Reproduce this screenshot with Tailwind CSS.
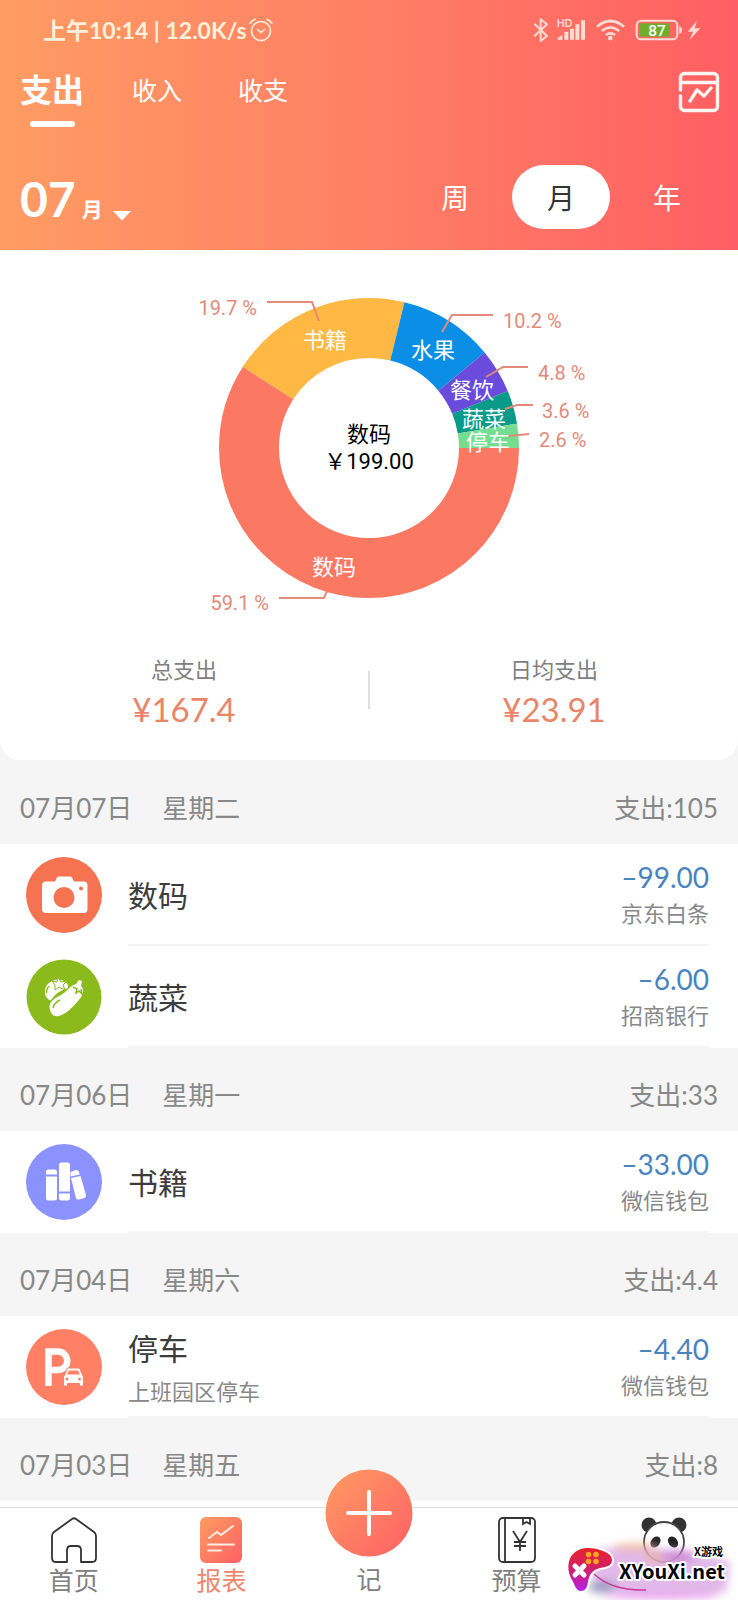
<!DOCTYPE html>
<html lang="zh-CN">
<head>
  <meta charset="UTF-8" />
  <meta name="viewport" content="width=device-width, initial-scale=1.0" />
  <script src="https://cdn.jsdelivr.net/npm/@tailwindcss/browser@4"></script>
  <title>报表</title>
</head>
<body class="bg-[#f5f5f5] min-h-screen flex flex-col font-['Lato','Noto_Sans_CJK_SC',sans-serif] text-[#3c3c3c]">

  <!-- Header -->
  <header class="bg-linear-to-r/srgb from-[#ff9c63] via-[#ff7f65] to-[#ff5f63] text-white">
    <!-- Status bar -->
    <div class="flex items-center justify-between h-[60px] pl-[43px] pr-9 text-[#fff0dc]">
      <div class="flex items-center gap-0.5 text-[23px] leading-7 font-bold">
        <span>上午10:14 | 12.0K/s</span>
        <svg class="w-6 h-6" viewBox="0 0 24 24" fill="none" stroke="currentColor" stroke-width="1.6" stroke-linecap="round">
          <circle cx="12" cy="13" r="9.5" />
          <path d="M1 5.5Q3 2.5 6 1.2M23 5.5Q21 2.5 18 1.2M8.5 11.5l3.5 3 3.5-3" />
        </svg>
      </div>
      <svg class="w-[172px] h-7" viewBox="486 48 516 84" fill="none" stroke="#ffdcd2" stroke-width="6">
        <path d="M499 71l38 37-19 15V58l19 15-38 36" stroke-linejoin="round" />
        <text x="566" y="80" font-size="31" font-weight="700" fill="#ffdcd2" stroke="none" font-family="Lato">HD</text>
        <path d="M569 119v-6l14-8v14zM589 119v-24h12v24zM606 119V86h12v33zM622 119V73h12v46zM639 119V61h12v58z" fill="#ffdcd2" stroke="none" />
        <path d="M687 80Q727 46 768 80M701 93Q727 72 754 93M714 105Q727 95 741 105" stroke-width="8" />
        <circle cx="727" cy="114" r="7" fill="#ffdcd2" stroke="none" />
        <rect x="806" y="62" width="122" height="56" rx="14" />
        <path d="M815 70h89v40h-89z" fill="#6fae2c" stroke="none" />
        <path d="M934 78q8 3 8 12t-8 12z" fill="#ffdcd2" stroke="none" />
        <text x="867" y="107" text-anchor="middle" font-size="46" font-weight="500" fill="#fff" stroke="none" font-family="Roboto">87</text>
        <path d="M987 62l-28 33h16l-10 24 32-34h-17z" fill="#ffdcd2" stroke="none" />
      </svg>
    </div>

    <!-- Tabs -->
    <div class="flex items-start justify-between h-[72px] pl-5 pr-[18px]">
      <nav class="flex items-start pt-3 text-[25px] leading-9">
        <button class="flex flex-col items-center mr-5 text-[32px] leading-9 font-bold">
          支出
          <span class="mt-[13px] w-[45px] h-1.5 rounded-sm bg-white"></span>
        </button>
        <button class="px-7">收入</button>
        <button class="px-7">收支</button>
      </nav>
      <button class="mt-[11px]" aria-label="图表">
        <svg class="w-[42px] h-[42px]" viewBox="0 0 42 42" fill="none" stroke="#fff4f0" stroke-width="3.4" stroke-linecap="round" stroke-linejoin="round">
          <path d="M2.500 19V6.500a4 4 0 0 1 4-4h29a4 4 0 0 1 4 4v29a4 4 0 0 1-4 4h-29a4 4 0 0 1-4-4V25M3 11.500h36M12 30l7-11 7 6 7-8" />
        </svg>
      </button>
    </div>

    <!-- Period -->
    <div class="flex items-center justify-between pt-[33px] pb-[21px] pl-5 pr-[22px]">
      <button class="flex items-baseline h-16 pt-0.5 font-bold">
        <span class="text-[48px] leading-[64px]">07</span>
        <span class="ml-1.5 text-[21px]">月</span>
        <svg class="ml-2.5 w-[18px] h-2.5 self-end mb-2" viewBox="0 0 18 10" fill="#fff"><path d="M0 0h18l-9 9.500z" /></svg>
      </button>
      <div class="flex gap-2 text-[28px]">
        <button class="w-[98px] h-16 pt-0.5">周</button>
        <button class="w-[98px] h-16 pt-0.5 rounded-full bg-white text-[#333]">月</button>
        <button class="w-[98px] h-16 pt-0.5">年</button>
      </div>
    </div>
  </header>

  <main class="flex-1">
    <!-- Chart -->
    <section class="bg-white rounded-b-[20px] pb-[31px]">
      <svg class="block mx-auto w-[470px] h-[401px]" viewBox="-20 0 470 401" font-family="Roboto, 'Noto Sans CJK SC', sans-serif" font-size="22">
        <g fill="none" stroke-width="60">
          <circle cx="215" cy="198" r="120" pathLength="1000" stroke="#fb7863" stroke-dasharray="591 409" />
          <circle cx="215" cy="198" r="120" pathLength="1000" stroke="#ffb843" stroke-dasharray="197 803" stroke-dashoffset="-591" />
          <circle cx="215" cy="198" r="120" pathLength="1000" stroke="#0a8ee6" stroke-dasharray="102 898" stroke-dashoffset="-788" />
          <circle cx="215" cy="198" r="120" pathLength="1000" stroke="#6a4bdc" stroke-dasharray="48 952" stroke-dashoffset="-890" />
          <circle cx="215" cy="198" r="120" pathLength="1000" stroke="#0a9a8a" stroke-dasharray="36 964" stroke-dashoffset="-938" />
          <circle cx="215" cy="198" r="120" pathLength="1000" stroke="#75dd90" stroke-dasharray="26 974" stroke-dashoffset="-974" />
        </g>
        <g fill="none" stroke="#e38a78" stroke-width="2">
          <path d="M113 52h45l7 19" />
          <path d="M288 82l10-17h41" />
          <path d="M332 127l17-10h25" />
          <path d="M351 159l12-4h16" />
          <path d="M354 186l21-2" />
          <path d="M173 341l-3 7h-45" />
        </g>
        <g fill="#e38a78" font-size="20">
          <text x="103" y="65" text-anchor="end">19.7 %</text>
          <text x="349" y="78">10.2 %</text>
          <text x="384" y="130">4.8 %</text>
          <text x="388" y="168">3.6 %</text>
          <text x="385" y="197">2.6 %</text>
          <text x="115" y="360" text-anchor="end">59.1 %</text>
        </g>
        <g fill="#fff" text-anchor="middle">
          <text x="171" y="98">书籍</text>
          <text x="279" y="108">水果</text>
          <text x="318" y="148">餐饮</text>
          <text x="330" y="177">蔬菜</text>
          <text x="334" y="200">停车</text>
          <text x="180" y="325">数码</text>
        </g>
        <g fill="#000" text-anchor="middle">
          <text x="215" y="192">数码</text>
          <text x="215" y="219">￥199.00</text>
        </g>
      </svg>

      <div class="flex items-center text-center">
        <div class="flex-1">
          <p class="text-[22px] leading-[38px] text-[#808080]">总支出</p>
          <p class="text-[33px] leading-10 text-[#e98568]">¥167.4</p>
        </div>
        <div class="w-0.5 h-[38px] bg-[#dedede]"></div>
        <div class="flex-1">
          <p class="text-[22px] leading-[38px] text-[#808080]">日均支出</p>
          <p class="text-[33px] leading-10 text-[#e98568]">¥23.91</p>
        </div>
      </div>
    </section>

    <!-- 07-07 -->
    <h2 class="flex items-center h-[84px] pt-3 px-5 text-[26px] text-[#888]">
      <span>07月07日</span><span class="ml-[30px]">星期二</span><span class="ml-auto">支出:105</span>
    </h2>
    <ul class="bg-white">
      <li class="flex items-center h-[102px] pl-[26px] pr-[29px]">
        <svg class="w-[76px] h-[76px] shrink-0" viewBox="0 0 76 76">
          <circle cx="38" cy="38" r="38" fill="#f57350" />
          <path d="M20 24.500h9l2-4q.5-1 2-1h11q1.500 0 2 1l2 4h9.500a4 4 0 0 1 4 4V52a4 4 0 0 1-4 4H20a4 4 0 0 1-4-4V28.500a4 4 0 0 1 4-4z" fill="#fff" />
          <circle cx="38" cy="40.500" r="10.500" fill="#f57350" />
          <circle cx="55" cy="31.500" r="2" fill="#f57350" />
        </svg>
        <div class="flex flex-1 items-center self-stretch ml-[26px] border-b-2 border-[#f2f2f2]">
          <p class="pt-0.5 text-[30px] leading-[44px]">数码</p>
          <div class="ml-auto pt-1 text-right">
            <p class="text-[28px] leading-9 text-[#4a84bd]">–99.00</p>
            <p class="text-[22px] leading-[38px] text-[#888]">京东白条</p>
          </div>
        </div>
      </li>
      <li class="flex items-center h-[102px] pl-[26px] pr-[29px]">
        <svg class="w-[76px] h-[76px] shrink-0" viewBox="0 0 76 76">
          <circle cx="38" cy="38" r="37.500" fill="#8aba1b" />
          <path d="M22 40C16 34 19 25 26 22q6-3 12 0 5 3 4 7Q31 32 25 41q-1 1-3-1z" fill="#fff" />
          <path d="M26 22l5 1 1-5 3 5 6-1-4 4 2 5-6-3-4 3v-5z" fill="#fff" stroke="#8aba1b" stroke-width="1" />
          <path d="M20.500 34q0-5 3-7" fill="none" stroke="#8aba1b" stroke-width="1.500" />
          <path d="M24 51c-2-7 3-11 9-14 7-3 10-10 17-12l3-4 3 1-1 5c4 4 2 10-3 15-6 7-12 13-19 15-5 1-8-2-9-6z" fill="#fff" />
          <path d="M47 28l4 2-1 4 3-2 3 3-1-5M27 49q1-5 7-8" fill="none" stroke="#8aba1b" stroke-width="1.500" />
        </svg>
        <div class="flex flex-1 items-center self-stretch ml-[26px] border-b-2 border-[#f5f5f5]">
          <p class="pt-0.5 text-[30px] leading-[44px]">蔬菜</p>
          <div class="ml-auto pt-1 text-right">
            <p class="text-[28px] leading-9 text-[#4a84bd]">–6.00</p>
            <p class="text-[22px] leading-[38px] text-[#888]">招商银行</p>
          </div>
        </div>
      </li>
    </ul>

    <!-- 07-06 -->
    <h2 class="flex items-center h-[83px] pt-3 px-5 text-[26px] text-[#888]">
      <span>07月06日</span><span class="ml-[30px]">星期一</span><span class="ml-auto">支出:33</span>
    </h2>
    <ul class="bg-white">
      <li class="flex items-center h-[102px] pl-[26px] pr-[29px]">
        <svg class="w-[76px] h-[76px] shrink-0" viewBox="0 0 76 76">
          <circle cx="38" cy="38" r="38" fill="#8c92fd" />
          <g fill="#fff">
            <path d="M20 30.500V28q0-2.500 2.500-2.500h6q2.500 0 2.500 2.500v2.500zM20 32.500h11V54q0 2.500-2.500 2.500h-6Q20 56.500 20 54z" />
            <path d="M33 47.500V21q0-2.500 2.500-2.500h6Q44 18.500 44 21v26.500zM33 49.500h11V54q0 2.500-2.500 2.500h-6Q33 56.500 33 54z" />
            <path d="M44.500 28l5.500-2q2-.5 3 2l.8 2.500-9.300 2zM45 34l9.500-2L60 51q.5 2-1.500 3l-5.500 1.500q-2.500.5-3-1.500z" />
          </g>
        </svg>
        <div class="flex flex-1 items-center self-stretch ml-[26px] border-b-2 border-[#f5f5f5]">
          <p class="pt-0.5 text-[30px] leading-[44px]">书籍</p>
          <div class="ml-auto pt-1 text-right">
            <p class="text-[28px] leading-9 text-[#4a84bd]">–33.00</p>
            <p class="text-[22px] leading-[38px] text-[#888]">微信钱包</p>
          </div>
        </div>
      </li>
    </ul>

    <!-- 07-04 -->
    <h2 class="flex items-center h-[83px] pt-3 px-5 text-[26px] text-[#888]">
      <span>07月04日</span><span class="ml-[30px]">星期六</span><span class="ml-auto">支出:4.4</span>
    </h2>
    <ul class="bg-white">
      <li class="flex items-center h-[102px] pl-[26px] pr-[29px]">
        <svg class="w-[76px] h-[76px] shrink-0" viewBox="0 0 76 76">
          <circle cx="38" cy="38" r="38" fill="#ff8065" />
          <path d="M22.500 57V22.500h9.500a8.500 8.500 0 0 1 0 18.500h-9.500" fill="none" stroke="#fff" stroke-width="6.500" />
          <path d="M38.500 46l3-7h12l3 7q1 1 1 3v8h-4v-2.500h-12V57h-4v-8q0-2 1-3z" fill="#fff" stroke="#ff8065" stroke-width="1" />
          <path d="M41 45.500l2-4h9l2 4z" fill="#ff8065" />
          <circle cx="41" cy="50" r="1.500" fill="#ff8065" />
          <circle cx="53.500" cy="50" r="1.500" fill="#ff8065" />
        </svg>
        <div class="flex flex-1 items-center self-stretch ml-[26px] border-b-2 border-[#f5f5f5]">
          <div class="pt-2">
            <p class="text-[30px] leading-[44px]">停车</p>
            <p class="text-[22px] leading-[44px] text-[#888]">上班园区停车</p>
          </div>
          <div class="ml-auto pt-1 text-right">
            <p class="text-[28px] leading-9 text-[#4a84bd]">–4.40</p>
            <p class="text-[22px] leading-[38px] text-[#888]">微信钱包</p>
          </div>
        </div>
      </li>
    </ul>

    <!-- 07-03 -->
    <h2 class="flex items-center h-[83px] pt-3 px-5 text-[26px] text-[#888]">
      <span>07月03日</span><span class="ml-[30px]">星期五</span><span class="ml-auto">支出:8</span>
    </h2>
    <div class="h-1.5 bg-white"></div>
  </main>

  <!-- Bottom nav -->
  <nav class="sticky bottom-0 grid grid-cols-5 h-[93px] border-t border-[#dedede] bg-white text-[25px] leading-8 text-[#808080]">
    <button class="flex flex-col items-center pt-2">
      <svg class="w-[46px] h-[48px]" viewBox="0 0 46 48" fill="none" stroke="#333" stroke-width="1.800" stroke-linejoin="round">
        <path d="M21 3Q23 1.500 25 3l18 13q2 1.500 2 4v22q0 4-4 4H30V34q0-4-4-4h-6q-4 0-4 4v12H5q-4 0-4-4V20q0-2.500 2-4z" />
      </svg>
      <span>首页</span>
    </button>
    <button class="flex flex-col items-center pt-2 text-[#ef866c]">
      <svg class="w-[42px] h-[48px]" viewBox="0 0 42 48">
        <defs>
          <linearGradient id="warm" x1="0" y1="0" x2="1" y2="1">
            <stop offset="0" stop-color="#ff9c63" />
            <stop offset="1" stop-color="#ff6064" />
          </linearGradient>
        </defs>
        <rect y="1" width="42" height="46" rx="6" fill="url(#warm)" />
        <path d="M9 22l8-6 4 3 12-9M8 28.500h26M8 34.500h13" fill="none" stroke="#ffeee2" stroke-width="2" stroke-linecap="round" />
      </svg>
      <span>报表</span>
    </button>
    <button class="relative flex flex-col items-center pt-[55px]">
      <svg class="absolute -top-[39px] w-[88px] h-[88px]" viewBox="0 0 88 88">
        <circle cx="44" cy="44" r="43.500" fill="url(#warm)" />
        <path d="M44 23v42M23 44h42" stroke="#fff" stroke-width="4" stroke-linecap="round" />
      </svg>
      <span>记</span>
    </button>
    <button class="flex flex-col items-center pt-2">
      <svg class="w-[38px] h-[48px]" viewBox="0 0 38 48" fill="none" stroke="#333" stroke-width="1.800">
        <rect x="1" y="2" width="36" height="44" rx="4" />
        <path d="M7 2v44M25 2v6l3.500-2 3.500 2V2M15 15l7 11 7-11M22 26v9M16 26h12M16 30h12" />
      </svg>
      <span>预算</span>
    </button>
    <button class="flex flex-col items-center pt-2" aria-label="我的">
      <svg class="w-[46px] h-[48px]" viewBox="0 0 46 48">
        <circle cx="8" cy="9" r="7.500" fill="#333" />
        <circle cx="38" cy="9" r="7.500" fill="#333" />
        <circle cx="23" cy="26" r="20" fill="#fff" stroke="#444" stroke-width="1.800" />
        <ellipse cx="14.500" cy="26" rx="4.500" ry="6" transform="rotate(35 14.500 26)" fill="#222" />
        <ellipse cx="32" cy="26" rx="4.500" ry="6" transform="rotate(-35 32 26)" fill="#222" />
      </svg>
    </button>

    <!-- Site badge -->
    <svg class="absolute right-0 bottom-0 w-[198px] h-[80px] pointer-events-none" viewBox="0 40 198 80" font-family="'Noto Sans CJK SC', sans-serif" font-weight="700">
      <defs>
        <linearGradient id="pad" x1="0" y1="0" x2="0" y2="1">
          <stop offset="0" stop-color="#e8222b" />
          <stop offset="0.500" stop-color="#d0206c" />
          <stop offset="1" stop-color="#b321e6" />
        </linearGradient>
        <filter id="glow" x="-30%" y="-60%" width="160%" height="220%"><feGaussianBlur stdDeviation="4" /></filter>
      </defs>
      <g filter="url(#glow)">
        <path d="M48 72q35-8 82-2 40 3 60 12l-4 30q-70 10-130-3z" fill="#dba7e4" opacity="0.800" />
        <ellipse cx="95" cy="67" rx="22" ry="4" fill="#f0b283" opacity="0.700" />
        <ellipse cx="116" cy="78" rx="12" ry="4" fill="#f0b08a" opacity="0.800" />
        <ellipse cx="62" cy="107" rx="14" ry="6" fill="#9c9cc0" />
        <ellipse cx="138" cy="76" rx="18" ry="6" fill="#c77ed2" opacity="0.800" />
        <ellipse cx="120" cy="116" rx="58" ry="3" fill="#ec9df0" />
      </g>
      <path d="M54 94q18 17 52 16" fill="none" stroke="#c93a9a" stroke-width="1.500" />
      <path d="M33 74c7-7 17-7 27-4 7 2 12 5 12 10 0 6-6 7-12 8-8 2-11 7-12 14-1 6-3 9-7 9-5 0-6-6-9-11-5-8-5-20 1-26z" fill="url(#pad)" stroke="#fff" stroke-width="4" paint-order="stroke" />
      <path d="M35 86l9 9M44 86l-9 9" stroke="#fff" stroke-width="5" stroke-linecap="round" />
      <g fill="#ffa51d">
        <circle cx="48.500" cy="74.500" r="2.800" /><circle cx="56" cy="74.500" r="2.800" />
        <circle cx="48.500" cy="81.500" r="2.800" /><circle cx="56" cy="81.500" r="2.800" />
      </g>
      <g fill="#000" stroke="#fff" stroke-width="4" stroke-linejoin="round" paint-order="stroke">
        <text x="154" y="76" font-size="11">X游戏</text>
        <text x="79" y="99" font-size="20">XYouXi.net</text>
      </g>
    </svg>
  </nav>

</body>
</html>
